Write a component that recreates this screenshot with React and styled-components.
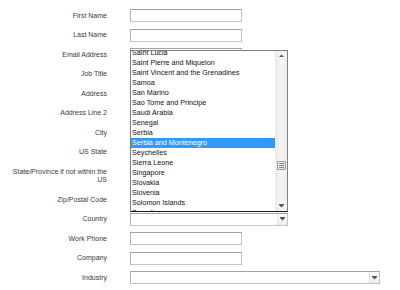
import React from "react";
import styled, { createGlobalStyle } from "styled-components";

const Global = createGlobalStyle`
  html, body { margin: 0; padding: 0; background: #fff; }
  body { font-family: "Liberation Sans", Arial, sans-serif; }
`;

const Form = styled.div`
  padding: 6px 0 0 12px;
  display: grid;
  grid-template-columns: 95px auto;
  column-gap: 23px;
  align-items: center;
  justify-items: start;
`;

const Label = styled.div`
  justify-self: stretch;
  text-align: right;
  font-size: 7px;
  line-height: 8.5px;
  padding: 5.5px 0;
  color: #3a3a3a;
`;

const Field = styled.div`
  position: relative;
  display: flex;
`;

const TextBox = styled.div`
  box-sizing: border-box;
  width: 112px;
  height: 13px;
  background: #fff;
  border: 1px solid #c4c4c4;
  border-top-color: #a3a3a3;
  border-left-color: #b4b4b4;
`;

const SelectBox = styled.div`
  box-sizing: border-box;
  width: ${(p) => p.$w}px;
  height: 13px;
  display: flex;
  background: #fff;
  border: 1px solid #c4c4c4;
  border-top-color: #a3a3a3;
  border-left-color: #b4b4b4;
`;

const SelectValue = styled.div`
  flex: 1;
  border-right: 1px solid #e6e6e6;
`;

const ArrowBtn = styled.div`
  width: 9px;
  display: flex;
  align-items: center;
  justify-content: center;
  background: linear-gradient(#fbfbfb, #ececec);
`;

const ListBox = styled.div`
  position: absolute;
  z-index: 10;
  left: 0;
  bottom: calc(100% + 1px);
  box-sizing: border-box;
  width: 158px;
  height: 162px;
  display: flex;
  background: #fff;
  border: 1px solid #7f7f7f;
  border-bottom-color: #1a1a1a;
`;

const Items = styled.div`
  flex: 1;
  overflow: hidden;
`;

const ItemsInner = styled.div`
  margin-top: -3px;
`;

const Item = styled.div`
  font-size: 7.2px;
  line-height: 10px;
  height: 10px;
  padding-left: 1px;
  white-space: nowrap;
  color: ${(p) => (p.$sel ? "#fff" : "#111")};
  background: ${(p) => (p.$sel ? "#3399ff" : "transparent")};
`;

const ScrollBar = styled.div`
  width: 11px;
  display: flex;
  flex-direction: column;
  background: linear-gradient(90deg, #e9e9e9, #f5f5f5 40%, #f0f0f0);
  border-left: 1px solid #ececec;
`;

const ScrollBtn = styled.div`
  height: 10px;
  display: flex;
  align-items: center;
  justify-content: center;
`;

const Track = styled.div`
  flex: 1;
  padding-top: ${(p) => p.$offset}px;
`;

const Thumb = styled.div`
  box-sizing: border-box;
  margin-left: 1px;
  width: 9px;
  height: 9px;
  border: 1px solid #9b9b9b;
  border-radius: 1px;
  background: linear-gradient(90deg, #f2f2f2, #dcdcdc);
  display: flex;
  flex-direction: column;
  align-items: center;
  justify-content: center;
  gap: 1px;
`;

const Grip = styled.div`
  width: 5px;
  height: 1px;
  background: #8a8a8a;
`;

const Arrow = ({ up }) => (
  <svg width="5" height="4" viewBox="0 0 5 4">
    {up ? (
      <path d="M0 3 L5 3 L2.5 0.5 Z" fill="#4a5a6e" />
    ) : (
      <>
        <rect x="0" y="0" width="5" height="1" fill="#4a5a6e" />
        <path d="M0 1 L5 1 L2.5 3.6 Z" fill="#4a5a6e" />
      </>
    )}
  </svg>
);

const countries = [
  "Saint Lucia",
  "Saint Pierre and Miquelon",
  "Saint Vincent and the Grenadines",
  "Samoa",
  "San Marino",
  "Sao Tome and Principe",
  "Saudi Arabia",
  "Senegal",
  "Serbia",
  "Serbia and Montenegro",
  "Seychelles",
  "Sierra Leone",
  "Singapore",
  "Slovakia",
  "Slovenia",
  "Solomon Islands",
  "Somalia",
];

const Select = ({ w, children }) => (
  <SelectBox $w={w}>
    <SelectValue />
    <ArrowBtn>
      <Arrow />
    </ArrowBtn>
    {children}
  </SelectBox>
);

const rows = [
  ["First Name", "text"],
  ["Last Name", "text"],
  ["Email Address", "text"],
  ["Job Title", "text"],
  ["Address", "text"],
  ["Address Line 2", "text"],
  ["City", "text"],
  ["US State", "text"],
  ["State/Province if not within the US", "text"],
  ["Zip/Postal Code", "text"],
  ["Country", "country"],
  ["Work Phone", "text"],
  ["Company", "text"],
  ["Industry", "select"],
];

export default function App() {
  return (
    <>
      <Global />
      <Form>
        {rows.map(([label, kind]) => (
          <React.Fragment key={label}>
            <Label>{label}</Label>
            <Field>
              {kind === "text" && <TextBox />}
              {kind === "select" && <Select w={250} />}
              {kind === "country" && (
                <Select w={158}>
                  <ListBox>
                    <Items>
                      <ItemsInner>
                        {countries.map((c) => (
                          <Item key={c} $sel={c === "Serbia and Montenegro"}>
                            {c}
                          </Item>
                        ))}
                      </ItemsInner>
                    </Items>
                    <ScrollBar>
                      <ScrollBtn>
                        <Arrow up />
                      </ScrollBtn>
                      <Track $offset={100}>
                        <Thumb>
                          <Grip />
                          <Grip />
                          <Grip />
                        </Thumb>
                      </Track>
                      <ScrollBtn>
                        <Arrow />
                      </ScrollBtn>
                    </ScrollBar>
                  </ListBox>
                </Select>
              )}
            </Field>
          </React.Fragment>
        ))}
      </Form>
    </>
  );
}
